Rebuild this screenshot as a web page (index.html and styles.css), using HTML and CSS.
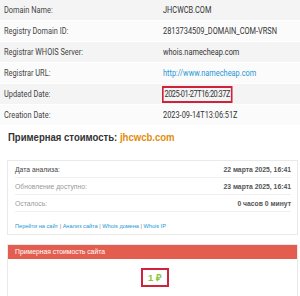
FILE: index.html
```html
<!DOCTYPE html>
<html lang="ru">
<head>
    <meta charset="UTF-8">
    <title>jhcwcb.com</title>
    <link rel="stylesheet" href="styles.css">
</head>
<body>
<div class="whois">
    <div class="row"><span class="label"><i>Domain Name:</i></span><span class="value"><i>JHCWCB.COM</i></span></div>
    <div class="row"><span class="label"><i>Registry Domain ID:</i></span><span class="value"><i>2813734509_DOMAIN_COM-VRSN</i></span></div>
    <div class="row"><span class="label"><i>Registrar WHOIS Server:</i></span><span class="value"><i>whois.namecheap.com</i></span></div>
    <div class="row"><span class="label"><i>Registrar URL:</i></span><span class="value"><i><a href="#">http://www.namecheap.com</a></i></span></div>
    <div class="row"><span class="label"><i>Updated Date:</i></span><span class="value"><i class="mark">2025-01-27T16:20:37Z</i></span></div>
    <div class="row"><span class="label"><i>Creation Date:</i></span><span class="value"><i>2023-09-14T13:06:51Z</i></span></div>
</div>

<h2 class="title">Примерная стоимость: <span class="domain">jhcwcb.com</span></h2>

<div class="card">
    <div class="info">
        <div class="line strong"><span>Дата анализа:</span><b>22 марта 2025, 16:41</b></div>
        <div class="line"><span>Обновление доступно:</span><b>23 марта 2025, 16:41</b></div>
        <div class="line"><span>Осталось:</span><b>0 часов 0 минут</b></div>
    </div>
    <div class="links">
        <a href="#">Перейти на сайт</a> | <a href="#">Анализ сайта</a> | <a href="#">Whois домена</a> | <a href="#">Whois IP</a>
    </div>
</div>

<div class="card price">
    <div class="price-head">Примерная стоимость сайта</div>
    <div class="price-body"><span class="mark sum">1 ₽</span></div>
</div>
</body>
</html>
```
FILE: styles.css
```css
*{
    margin:0;
    padding:0;
    box-sizing:border-box;
}
body{
    background:#fff;
    font-family:Roboto,"Liberation Sans",Arial,sans-serif;
    color:#333;
}
a{
    color:#1e96d4;
    text-decoration:none;
}
.whois .row{
    display:grid;
    grid-template-columns:159px 1fr;
    height:21px;
    align-items:center;
    padding-left:4px;
    font-size:9px;
    white-space:nowrap;
    border-bottom:1px solid #fff;
}
.whois .row:nth-child(odd){
    background:#f4f4f4;
}
.whois .row:nth-child(even){
    background:#fbfbfb;
}
/* узкий шрифт: сжимаем текст по ширине */
.whois i{
    display:inline-block;
    font-style:normal;
    transform:scaleX(.82);
    transform-origin:left center;
}
.whois .label{
    color:#444;
}
.whois .value{
    color:#333;
}
.mark{
    border:2px solid #d0233b;
}
.whois .mark{
    line-height:13px;
    padding:0 1px;
    margin-left:-1px;
    letter-spacing:-.55px;
}
.title{
    margin:3px 0 0 8px;
    font-family:"Liberation Sans",Arial,sans-serif;
    font-size:11.5px;
    line-height:16px;
    font-weight:bold;
    color:#333;
    white-space:nowrap;
    transform:scaleX(.83);
    transform-origin:left center;
}
.title .domain{
    color:#df8d0c;
}
.card{
    margin:15px 2px 0 7px;
    border:1px solid #e9e9e9;
    font-family:"Liberation Sans",Arial,sans-serif;
    font-size:6.8px;
}
.info{
    padding:0 6px 0 7px;
}
.line{
    display:flex;
    justify-content:space-between;
    align-items:center;
    height:17px;
    border-bottom:1px solid #efefef;
    color:#999;
}
.line b{
    color:#555;
}
.line.strong span{
    color:#444;
}
.links{
    padding:6px 7px 0;
    height:22px;
    display:flex;
    align-items:center;
    font-size:5.6px;
    color:#888;
    white-space:pre;
}
.price{
    margin-top:9px;
}
.price-head{
    background:#e35e4f;
    color:#fff;
    font-size:6.8px;
    height:14px;
    line-height:14px;
    padding-left:7px;
}
.price-body{
    height:37px;
    display:flex;
    justify-content:center;
    align-items:center;
}
.sum{
    display:inline-block;
    font-size:9.5px;
    font-weight:bold;
    color:#8cc43c;
    line-height:15px;
    padding:0 5px;
    margin-left:5px;
}
```
